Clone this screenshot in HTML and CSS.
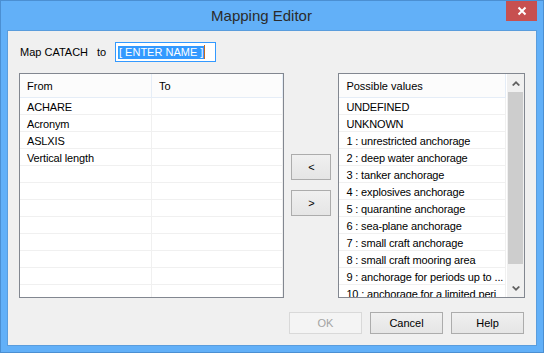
FILE: index.html
```html
<!DOCTYPE html>
<html lang="en">
<head>
  <meta charset="UTF-8">
  <title>Mapping Editor</title>
  <link rel="stylesheet" href="styles.css">
</head>
<body>
  <div class="window">
    <div class="titlebar">
      <div class="title">Mapping Editor</div>
      <div class="close">
        <svg width="10" height="10" viewBox="0 0 10 10"><path d="M1.5 1.5 L8.5 8.5 M8.5 1.5 L1.5 8.5" stroke="#fff" stroke-width="2"/></svg>
      </div>
    </div>

    <div class="client">
      <div class="name-row">
        <span class="map-label">Map CATACH</span>
        <span class="to-label">to</span>
        <div class="name-input"><span class="sel">[ ENTER NAME ]</span><span class="caret"></span></div>
      </div>

      <div class="panes">
        <div class="list map-list">
          <div class="row head"><div class="cell from">From</div><div class="cell to">To</div></div>
          <div class="row"><div class="cell from">ACHARE</div><div class="cell to"></div></div>
          <div class="row"><div class="cell from">Acronym</div><div class="cell to"></div></div>
          <div class="row"><div class="cell from">ASLXIS</div><div class="cell to"></div></div>
          <div class="row"><div class="cell from">Vertical length</div><div class="cell to"></div></div>
          <div class="row"><div class="cell from"></div><div class="cell to"></div></div>
          <div class="row"><div class="cell from"></div><div class="cell to"></div></div>
          <div class="row"><div class="cell from"></div><div class="cell to"></div></div>
          <div class="row"><div class="cell from"></div><div class="cell to"></div></div>
          <div class="row"><div class="cell from"></div><div class="cell to"></div></div>
          <div class="row"><div class="cell from"></div><div class="cell to"></div></div>
          <div class="row"><div class="cell from"></div><div class="cell to"></div></div>
          <div class="row"><div class="cell from"></div><div class="cell to"></div></div>
        </div>

        <div class="movers">
          <button class="btn mover">&lt;</button>
          <button class="btn mover">&gt;</button>
        </div>

        <div class="list value-list">
          <div class="values">
            <div class="row head"><div class="cell value">Possible values</div></div>
            <div class="row"><div class="cell value">UNDEFINED</div></div>
            <div class="row"><div class="cell value">UNKNOWN</div></div>
            <div class="row"><div class="cell value">1 : unrestricted anchorage</div></div>
            <div class="row"><div class="cell value">2 : deep water anchorage</div></div>
            <div class="row"><div class="cell value">3 : tanker anchorage</div></div>
            <div class="row"><div class="cell value">4 : explosives anchorage</div></div>
            <div class="row"><div class="cell value">5 : quarantine anchorage</div></div>
            <div class="row"><div class="cell value">6 : sea-plane anchorage</div></div>
            <div class="row"><div class="cell value">7 : small craft anchorage</div></div>
            <div class="row"><div class="cell value">8 : small craft mooring area</div></div>
            <div class="row"><div class="cell value">9 : anchorage for periods up to ...</div></div>
            <div class="row"><div class="cell value">10 : anchorage for a limited peri</div></div>
          </div>
          <div class="scrollbar">
            <div class="arrow">
              <svg width="8" height="5" viewBox="0 0 8 5"><path d="M0 4 L4 0 L8 4 L6.5 5 L4 2.5 L1.5 5 Z" fill="#606060"/></svg>
            </div>
            <div class="thumb"></div>
            <div class="track"></div>
            <div class="arrow">
              <svg width="8" height="5" viewBox="0 0 8 5"><path d="M0 1 L4 5 L8 1 L6.5 0 L4 2.5 L1.5 0 Z" fill="#606060"/></svg>
            </div>
          </div>
        </div>
      </div>

      <div class="actions">
        <button class="btn action" disabled>OK</button>
        <button class="btn action">Cancel</button>
        <button class="btn action">Help</button>
      </div>
    </div>
  </div>
</body>
</html>
```

FILE: styles.css
```css
body { margin: 0; background: #fff; font-family: "Liberation Sans", Arial, sans-serif; font-size: 11px; color: #000; }

.window {
  width: 544px; height: 353px; box-sizing: border-box;
  background: #62b0f8; border: 1px solid #4b8fd2;
  padding: 0 6px 6px 6px;
  display: flex; flex-direction: column;
}
.titlebar { height: 29px; display: flex; align-items: flex-start; margin: 0 -6px; }
.title {
  flex: 1; text-align: center; padding-left: 16px;
  font-size: 15px; line-height: 29px; color: #2b2b2b;
}
.close {
  width: 31px; height: 20px; margin-right: 6px;
  background: #c75050;
  display: flex; align-items: center; justify-content: center;
}

.client {
  height: 316px; box-sizing: border-box;
  background: #f0f0f0; border: 1px solid #5a9ddd;
  padding: 11px 11px 0 11px;
  display: flex; flex-direction: column;
}

.name-row { height: 20px; display: flex; align-items: center; }
.map-label { margin-left: 1px; width: 77px; }
.to-label { width: 18px; }
.name-input {
  width: 101px; height: 20px; box-sizing: border-box;
  border: 1px solid #3399ff; background: #fff;
  display: flex; align-items: center; padding-left: 2px;
}
.sel { background: #3399ff; color: #fff; line-height: 13px; padding: 0 1px; }
.caret { width: 1px; height: 14px; background: #c86a1e; }

.panes { display: flex; margin-top: 11px; height: 225px; }
.list {
  box-sizing: border-box; height: 225px;
  border: 1px solid #828790; background: #fff; overflow: hidden;
}
.map-list { width: 266px; }
.value-list { width: 187px; display: flex; }

.row { display: flex; height: 17px; }
.row.head { height: 24px; }
.cell {
  box-sizing: border-box; padding-left: 7px;
  border-right: 1px solid #f0f0f0; border-bottom: 1px solid #f0f0f0;
  line-height: 18px; white-space: nowrap; overflow: hidden;
  letter-spacing: -0.15px;
}
.head .cell {
  background: #fcfcfc; line-height: 25px; letter-spacing: 0;
  border-right-color: #e5edf7; border-bottom-color: #e5edf7;
}
.from { width: 132px; }
.to { width: 131px; }
.value { width: 167px; }

.values { width: 168px; }
.scrollbar { width: 17px; display: flex; flex-direction: column; background: #f0f0f0; }
.arrow { height: 18px; display: flex; align-items: center; justify-content: center; }
.thumb { height: 172px; background: #cdcdcd; margin: 0 1px; }
.track { flex: 1; }

.btn {
  font-family: "Liberation Sans", Arial, sans-serif; font-size: 11px; color: #000;
  border: 1px solid #acacac; border-radius: 0;
  background: linear-gradient(#f0f0f0, #e5e5e5);
  padding: 0;
}
.btn:disabled { color: #a3a3a3; border-color: #d9d9d9; background: #f4f4f4; }

.movers { width: 40px; margin: 0 7px; padding-top: 81px; display: flex; flex-direction: column; gap: 10px; }
.mover { width: 40px; height: 26px; }

.actions { display: flex; justify-content: flex-end; gap: 8px; margin-top: 14px; padding-right: 1px; }
.action { width: 73px; height: 22px; }
```
